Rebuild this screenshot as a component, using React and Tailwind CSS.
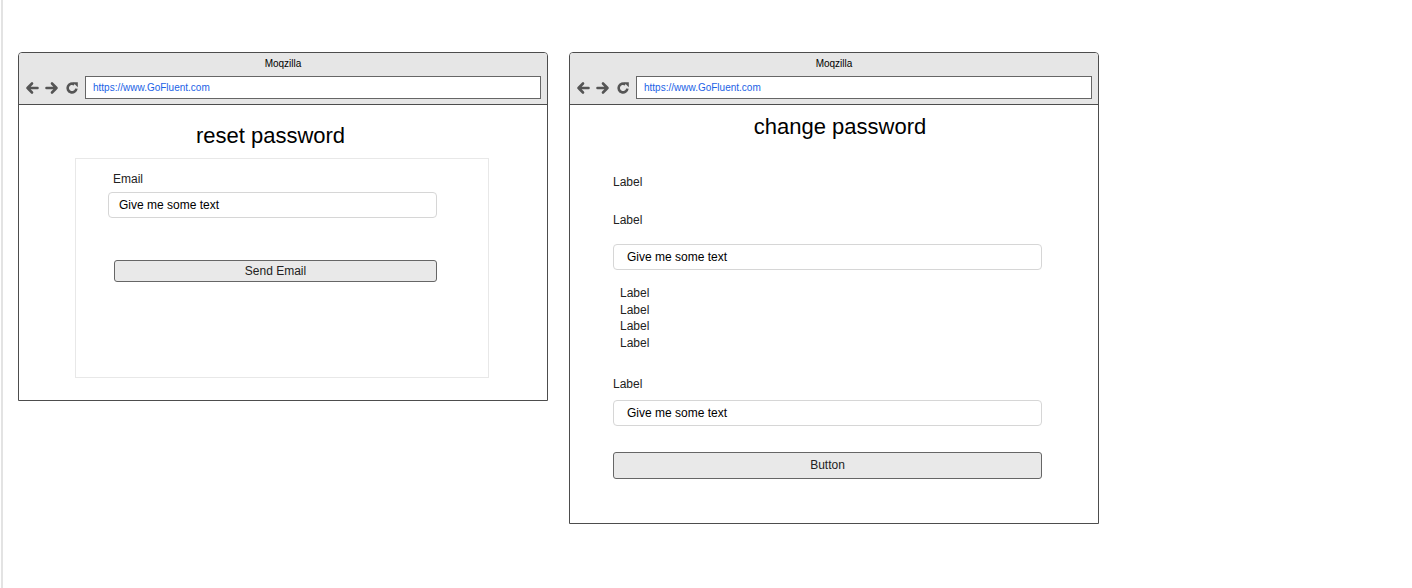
import React from "react";

const ArrowLeft = () => (
    <svg width="14" height="14" viewBox="0 0 14 14" fill="none" stroke="#555" strokeWidth="2.6" strokeLinecap="round" strokeLinejoin="round">
        <path d="M12.5 7H2.5M7 2.5L2.5 7L7 11.5" />
    </svg>
);

const ArrowRight = () => (
    <svg width="14" height="14" viewBox="0 0 14 14" fill="none" stroke="#555" strokeWidth="2.6" strokeLinecap="round" strokeLinejoin="round">
        <path d="M1.5 7H11.5M7 2.5L11.5 7L7 11.5" />
    </svg>
);

const Reload = () => (
    <svg width="14" height="14" viewBox="0 0 14 14" fill="none">
        <path d="M11.4 7.6A4.4 4.4 0 1 1 9.4 3.3" stroke="#555" strokeWidth="2.6" strokeLinecap="butt" />
        <path d="M7.8 1.3L12.8 1.3L12.8 6.3Z" fill="#555" />
    </svg>
);

const BrowserWindow = ({ children }) => (
    <div className="w-[530px] border border-[#4d4d4d] rounded-t-[4px] bg-white">
        <div className="bg-[#e6e6e6] border-b border-[#4d4d4d] rounded-t-[3px] pb-[5px]">
            <div className="h-[21px] leading-[21px] text-center text-[10px] text-black">Moqzilla</div>
            <div className="mt-[2px] flex items-center pl-[6px] pr-[6px]">
                <div className="flex items-center gap-[6px]">
                    <ArrowLeft />
                    <ArrowRight />
                    <Reload />
                </div>
                <div className="ml-[6px] flex-1 h-[23px] border-[1.5px] border-[#666] bg-white flex items-center pl-[7px] text-[10px] text-[#1a62e6]">
                    https://www.GoFluent.com
                </div>
            </div>
        </div>
        {children}
    </div>
);

const TextInput = ({ className = "" }) => (
    <div className={`h-[26px] border border-[#d6d6d6] rounded-[4px] bg-white flex items-center text-[12px] text-black ${className}`}>
        Give me some text
    </div>
);

const Label = ({ className = "" }) => (
    <div className={`text-[12px] leading-[14px] text-[#222] ${className}`}>Label</div>
);

export default function App() {
    return (
        <div className="h-[588px] w-[1412px] bg-white pl-px overflow-hidden" style={{ fontFamily: '"Liberation Sans", Arial, sans-serif' }}>
            <div className="h-full border-l-2 border-[#e3e3e3] pl-[15px] pt-[52px] flex items-start gap-[21px]">
                <BrowserWindow>
                    <div className="h-[295px] pt-[18px]">
                        <h1 className="h-[26px] leading-[26px] text-[22px] text-center text-black pr-[25px]">reset password</h1>
                        <div className="ml-[56px] mt-[9px] w-[414px] h-[220px] border border-[#e8e8e8] pt-[13px] pl-[32px]">
                            <div className="ml-[5px] text-[12px] leading-[14px] text-[#222]">Email</div>
                            <TextInput className="mt-[6px] w-[329px] pl-[10px]" />
                            <button className="mt-[42px] ml-[6px] w-[323px] h-[22px] bg-[#e9e9e9] border border-[#666] rounded-[3px] text-[12px] text-[#222] flex items-center justify-center">
                                Send Email
                            </button>
                        </div>
                    </div>
                </BrowserWindow>
                <BrowserWindow>
                    <div className="pt-[9px] pb-[44px]">
                        <h1 className="h-[26px] leading-[26px] text-[22px] text-center text-black pl-[12px]">change password</h1>
                        <div className="ml-[43px] w-[429px]">
                            <Label className="mt-[35px]" />
                            <Label className="mt-[24px]" />
                            <TextInput className="mt-[17px] pl-[13px]" />
                            <div className="mt-[15px] ml-[7px] text-[12px] leading-[16.7px] text-[#222]">
                                <div>Label</div>
                                <div>Label</div>
                                <div>Label</div>
                                <div>Label</div>
                            </div>
                            <Label className="mt-[25px]" />
                            <TextInput className="mt-[9px] pl-[13px]" />
                            <button className="mt-[26px] w-full h-[27px] bg-[#e9e9e9] border border-[#666] rounded-[3px] text-[12px] text-[#222] flex items-center justify-center">
                                Button
                            </button>
                        </div>
                    </div>
                </BrowserWindow>
            </div>
        </div>
    );
}
